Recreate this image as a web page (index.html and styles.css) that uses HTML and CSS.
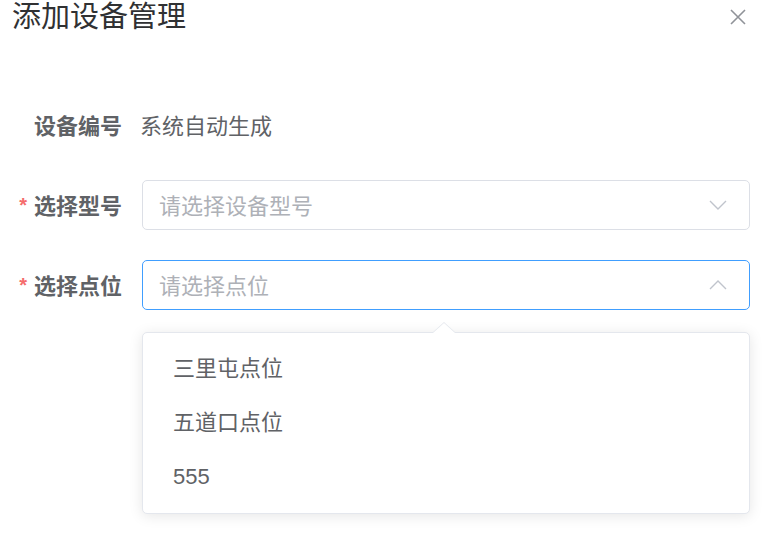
FILE: index.html
```html
<!DOCTYPE html>
<html lang="zh">
<head>
<meta charset="utf-8">
<title>添加设备管理</title>
<link rel="stylesheet" href="styles.css">
</head>
<body>
<div class="dialog">
  <div class="header">
    <span class="title">添加设备管理</span>
    <svg class="close" width="18" height="18" viewBox="0 0 18 18"><path d="M2 2L16 16M16 2L2 16" stroke="#909399" stroke-width="1.6" fill="none"/></svg>
  </div>
  <div class="form">
    <div class="row">
      <div class="label">设备编号</div>
      <div class="content text">系统自动生成</div>
    </div>
    <div class="row">
      <div class="label"><span class="req">*</span>选择型号</div>
      <div class="content">
        <div class="select">
          <span class="ph">请选择设备型号</span>
          <svg class="chev" width="18" height="10" viewBox="0 0 18 10"><path d="M1 1L9 9L17 1" stroke="#c0c4cc" stroke-width="1.4" fill="none"/></svg>
        </div>
      </div>
    </div>
    <div class="row">
      <div class="label"><span class="req">*</span>选择点位</div>
      <div class="content anchor">
        <div class="select focus">
          <span class="ph">请选择点位</span>
          <svg class="chev" width="18" height="10" viewBox="0 0 18 10"><path d="M1 9L9 1L17 9" stroke="#c0c4cc" stroke-width="1.4" fill="none"/></svg>
        </div>
        <div class="dropdown">
          <div class="arrow"></div>
          <ul class="list">
            <li>三里屯点位</li>
            <li>五道口点位</li>
            <li>555</li>
          </ul>
        </div>
      </div>
    </div>
  </div>
</div>
</body>
</html>
```

FILE: styles.css
```css
html, body {
  margin: 0;
  padding: 0;
  background: #ffffff;
}
body {
  font-family: "Liberation Sans", "Noto Sans CJK SC", sans-serif;
  color: #606266;
}
.dialog {
  width: 762px;
  height: 533px;
  overflow: hidden;
}
.header {
  display: flex;
  justify-content: space-between;
  align-items: center;
  height: 34px;
  padding: 0 15px 0 12px;
}
.title {
  font-size: 29px;
  line-height: 34px;
  color: #303133;
}
.close {
  display: block;
}
.form {
  display: flex;
  flex-direction: column;
  gap: 30px;
  padding-top: 66px;
}
.row {
  display: flex;
  align-items: center;
  height: 50px;
}
.label {
  width: 122px;
  padding-right: 20px;
  padding-bottom: 2px;
  text-align: right;
  font-size: 22px;
  font-weight: bold;
  color: #606266;
  white-space: nowrap;
}
.req {
  color: #f56c6c;
  font-size: 20px;
  margin-right: 7px;
  position: relative;
  top: -2px;
}
.content {
  width: 608px;
}
.content.text {
  font-size: 22px;
  margin-left: -2px;
  padding-bottom: 2px;
}
.anchor {
  position: relative;
}
.select {
  box-sizing: border-box;
  height: 50px;
  border: 1px solid #dcdfe6;
  border-radius: 5px;
  display: flex;
  align-items: center;
  justify-content: space-between;
  padding: 0 22px 0 16px;
}
.select.focus {
  border-color: #409eff;
}
.ph {
  font-size: 22px;
  color: #aeb1b7;
  padding-bottom: 2px;
}
.chev {
  display: block;
}
.dropdown {
  position: absolute;
  left: 0;
  top: 72px;
  width: 608px;
  height: 182px;
  box-sizing: border-box;
  background: #fff;
  border: 1px solid #e4e7ed;
  border-radius: 5px;
  box-shadow: 0 2px 14px rgba(0, 0, 0, 0.1);
}
.arrow {
  position: absolute;
  left: 289px;
  top: -11px;
  width: 0;
  height: 0;
  border-left: 12px solid transparent;
  border-right: 12px solid transparent;
  border-bottom: 11px solid #e4e7ed;
}
.arrow::after {
  content: "";
  position: absolute;
  left: -11px;
  top: 1px;
  border-left: 11px solid transparent;
  border-right: 11px solid transparent;
  border-bottom: 10px solid #fff;
}
.list {
  list-style: none;
  margin: 0;
  padding: 9px 0 0;
}
.list li {
  height: 54px;
  line-height: 54px;
  padding-left: 30px;
  font-size: 22px;
  color: #606266;
}
```
